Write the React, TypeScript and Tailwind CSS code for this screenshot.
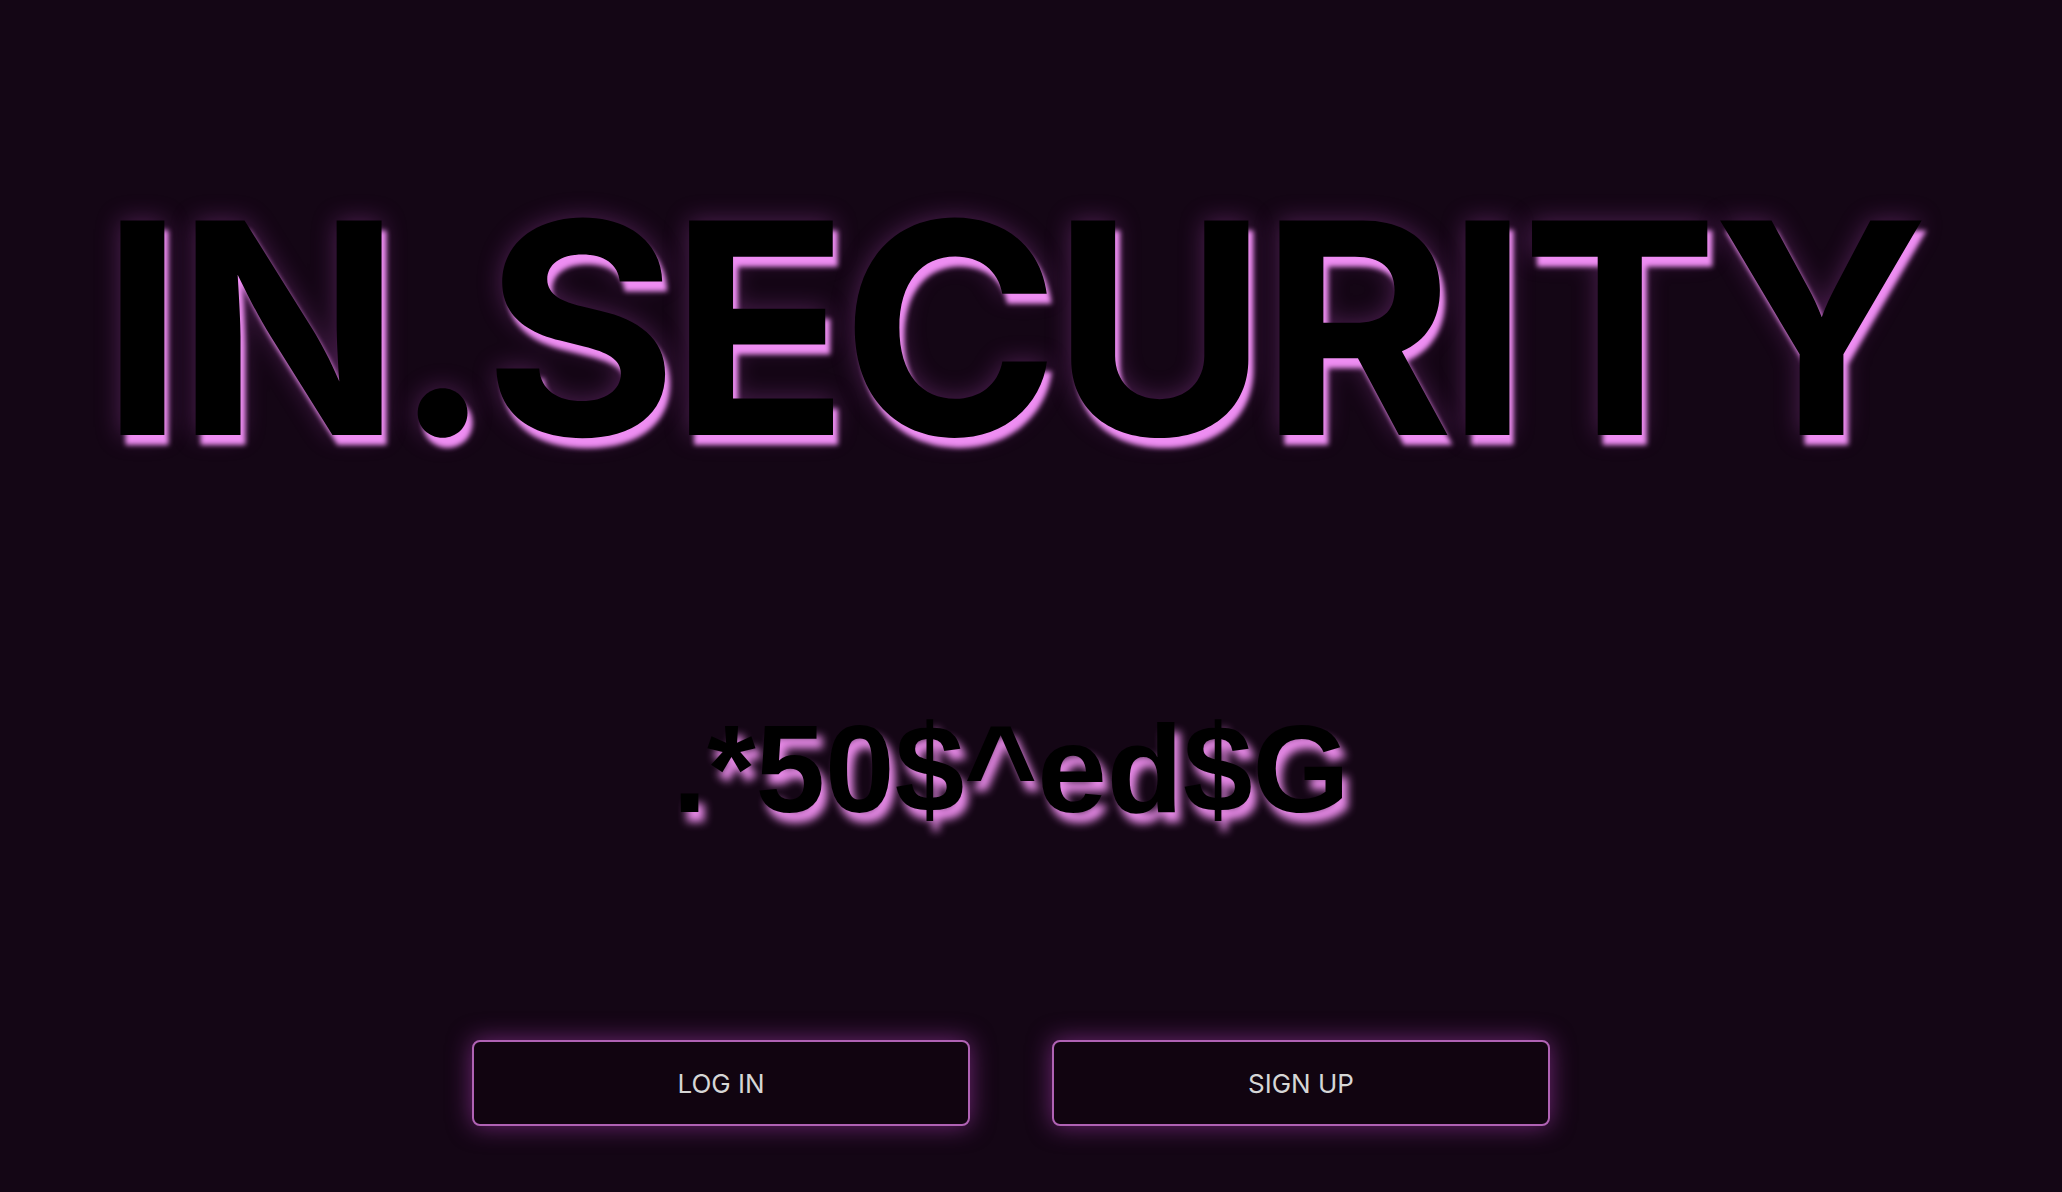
export default function App() {
  return (
    <div className="min-h-screen w-full bg-[#140615] flex flex-col items-center pt-[180px] pr-[40px] font-['Liberation_Sans',Arial,sans-serif]">
      {/* Title */}
      <h1
        className="text-[295px] leading-none font-bold tracking-[-0.026em] text-black whitespace-nowrap font-['Inter',sans-serif]"
        style={{ textShadow: '5px 10px 5px #ee8df2, 0 0 24px rgba(190, 80, 200, 0.35)' }}
      >
        IN.SECURITY
      </h1>

      {/* Scrambled subtitle */}
      <p
        className="mt-[231px] text-[125px] leading-none font-bold text-black whitespace-nowrap"
        style={{ textShadow: '6px 10px 8px #e88ae8' }}
      >
        .*50$^ed$G
      </p>

      {/* Actions */}
      <div className="mt-[209px] flex gap-[82px]">
        <button className="w-[498px] h-[86px] rounded-lg border-2 border-[#b062b4] bg-[#110410] text-[26px] text-[#d6d6d6] font-['Inter',sans-serif] shadow-[0_0_24px_rgba(170,60,180,0.6)]">
          LOG IN
        </button>
        <button className="w-[498px] h-[86px] rounded-lg border-2 border-[#b062b4] bg-[#110410] text-[26px] text-[#d6d6d6] font-['Inter',sans-serif] shadow-[0_0_24px_rgba(170,60,180,0.6)]">
          SIGN UP
        </button>
      </div>
    </div>
  )
}
